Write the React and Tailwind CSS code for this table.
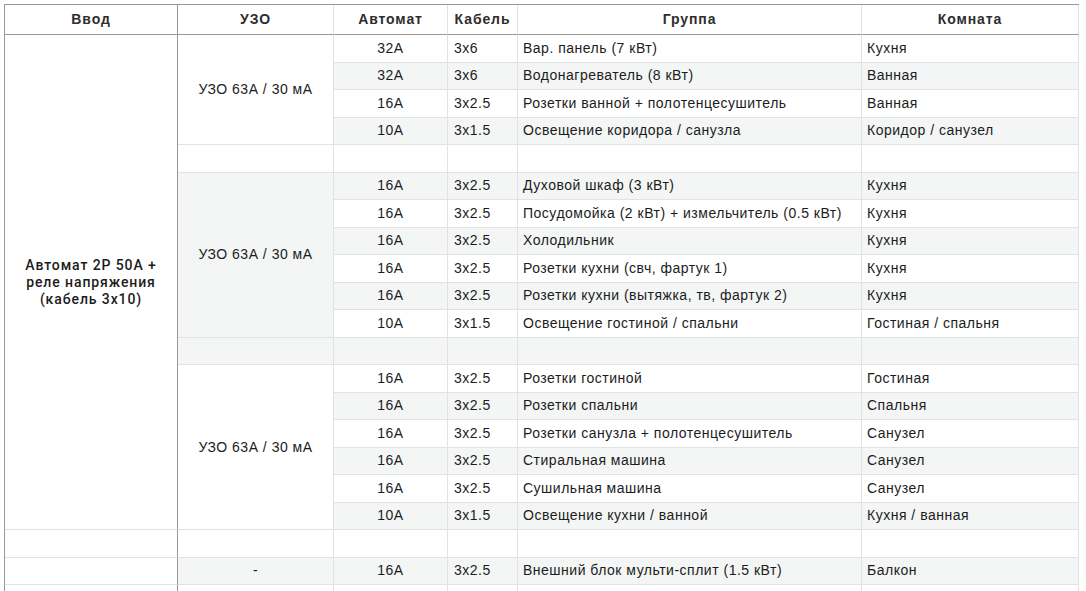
import React from "react";

const groups = [
  {
    uzo: "УЗО 63А / 30 мА",
    rows: [
      ["32A", "3x6", "Вар. панель (7 кВт)", "Кухня"],
      ["32A", "3x6", "Водонагреватель (8 кВт)", "Ванная"],
      ["16A", "3x2.5", "Розетки ванной + полотенцесушитель", "Ванная"],
      ["10A", "3x1.5", "Освещение коридора / санузла", "Коридор / санузел"],
    ],
  },
  {
    uzo: "УЗО 63А / 30 мА",
    rows: [
      ["16A", "3x2.5", "Духовой шкаф (3 кВт)", "Кухня"],
      ["16A", "3x2.5", "Посудомойка (2 кВт) + измельчитель (0.5 кВт)", "Кухня"],
      ["16A", "3x2.5", "Холодильник", "Кухня"],
      ["16A", "3x2.5", "Розетки кухни (свч, фартук 1)", "Кухня"],
      ["16A", "3x2.5", "Розетки кухни (вытяжка, тв, фартук 2)", "Кухня"],
      ["10A", "3x1.5", "Освещение гостиной / спальни", "Гостиная / спальня"],
    ],
  },
  {
    uzo: "УЗО 63А / 30 мА",
    rows: [
      ["16A", "3x2.5", "Розетки гостиной", "Гостиная"],
      ["16A", "3x2.5", "Розетки спальни", "Спальня"],
      ["16A", "3x2.5", "Розетки санузла + полотенцесушитель", "Санузел"],
      ["16A", "3x2.5", "Стиральная машина", "Санузел"],
      ["16A", "3x2.5", "Сушильная машина", "Санузел"],
      ["10A", "3x1.5", "Освещение кухни / ванной", "Кухня / ванная"],
    ],
  },
];

const cell =
  "flex items-center border-r border-b border-[#e2e2e2] text-[14px] tracking-[0.5px] text-[#1c1c1c] whitespace-nowrap";
// первая колонка (Ввод) — заголовок строк, справа тёмная линия
const lead = "border-r border-b border-r-[#9c9896] border-b-[#e2e2e2] bg-white";

function stripe(i) {
  return i % 2 === 1 ? "bg-[#f3f6f5]" : "bg-white";
}

function Head({ children, first }) {
  return (
    <div
      className={
        "flex items-center justify-center border-b border-r font-bold text-[14px] tracking-[0.9px] text-[#2e2e2e] bg-white " +
        (first ? "border-[#9c9896]" : "border-r-[#e2e2e2] border-b-[#9c9896]")
      }
    >
      {children}
    </div>
  );
}

function Line({ r, i }) {
  const bg = stripe(i);
  return (
    <>
      <div className={`${cell} ${bg} justify-center`}>{r[0]}</div>
      <div className={`${cell} ${bg} pl-[6px]`}>{r[1]}</div>
      <div className={`${cell} ${bg} pl-[5px]`}>{r[2]}</div>
      <div className={`${cell} ${bg} pl-[5px]`}>{r[3]}</div>
    </>
  );
}

function Empty({ i }) {
  const bg = stripe(i);
  return (
    <>
      <div className={`${cell} ${bg}`}></div>
      <div className={`${cell} ${bg}`}></div>
      <div className={`${cell} ${bg}`}></div>
      <div className={`${cell} ${bg}`}></div>
      <div className={`${cell} ${bg}`}></div>
    </>
  );
}

export default function App() {
  let idx = 0;
  const body = [];

  groups.forEach((g, gi) => {
    const start = idx;
    g.rows.forEach((r, ri) => {
      if (ri === 0) {
        body.push(
          <div
            key={`u${gi}`}
            className={`${cell} ${stripe(start)} justify-center ${
              g.rows.length === 4 ? "row-span-4" : "row-span-6"
            }`}
          >
            {g.uzo}
          </div>
        );
      }
      body.push(<Line key={`r${idx}`} r={r} i={idx} />);
      idx++;
    });
    if (gi < groups.length - 1) {
      body.push(<Empty key={`e${idx}`} i={idx} />);
      idx++;
    }
  });

  return (
    <div className="min-h-screen bg-white pt-[4px] pl-[4px] font-['Liberation_Sans',Arial,sans-serif]">
      <div className="grid w-max grid-cols-[173px_156px_114px_70px_344px_217px] grid-rows-[30px_repeat(21,27.5px)] border-t border-l border-[#9c9896]">
        <Head first>Ввод</Head>
        <Head>УЗО</Head>
        <Head>Автомат</Head>
        <Head>Кабель</Head>
        <Head>Группа</Head>
        <Head>Комната</Head>

        <div className="row-span-18 flex flex-col items-center justify-center border-r border-b border-r-[#9c9896] border-b-[#e2e2e2] bg-white text-center font-['Roboto',sans-serif] font-medium text-[14px] leading-[17px] tracking-[0.9px] text-[#1c1c1c]">
          <span>Автомат 2P 50A +</span>
          <span>реле напряжения</span>
          <span>(кабель 3x10)</span>
        </div>
        {body}

        <div className={lead}></div>
        <Empty i={18} />

        <div className={lead}></div>
        <div className={`${cell} bg-[#f3f6f5] justify-center`}>-</div>
        <Line r={["16A", "3x2.5", "Внешний блок мульти-сплит (1.5 кВт)", "Балкон"]} i={19} />

        <div className={lead}></div>
        <Empty i={20} />
      </div>
    </div>
  );
}
